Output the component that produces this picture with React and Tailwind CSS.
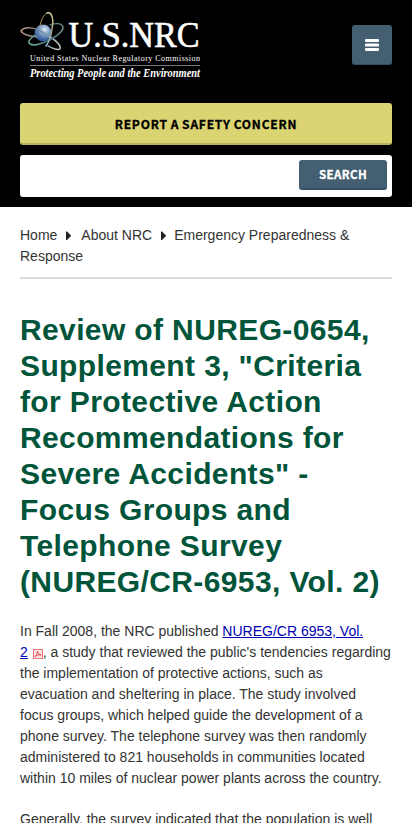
function Logo() {
  return (
    <svg width="190" height="76" viewBox="15 8 190 76" className="-ml-[5px] block overflow-visible" role="img" aria-label="U.S. NRC">
      <defs>
        <radialGradient id="globe" cx="0.6" cy="0.3" r="0.75">
          <stop offset="0" stopColor="#dce8f2" />
          <stop offset="0.4" stopColor="#7f9fc6" />
          <stop offset="1" stopColor="#1c4488" />
        </radialGradient>
        <linearGradient id="orbitA" x1="0" x2="1">
          <stop offset="0" stopColor="#c99a86" />
          <stop offset="0.5" stopColor="#6d8298" />
          <stop offset="1" stopColor="#c5d0d4" />
        </linearGradient>
        <linearGradient id="orbitB" x1="0" x2="1">
          <stop offset="0" stopColor="#6fae9a" />
          <stop offset="0.6" stopColor="#3c6878" />
          <stop offset="1" stopColor="#6f8a88" />
        </linearGradient>
        <linearGradient id="orbitC" x1="0" x2="0" y1="0" y2="1">
          <stop offset="0" stopColor="#ddd3a0" />
          <stop offset="0.5" stopColor="#a8a578" />
          <stop offset="1" stopColor="#93b8d8" />
        </linearGradient>
      </defs>
      <circle cx="43" cy="33" r="8.500" fill="url(#globe)" />
      <g fill="none" strokeWidth="1.5" strokeLinecap="round">
        <path d="M37 37C28 36 22 34 21 31C24 26 35 27 44 33C53 38 62 45 60 49C57 51 52 48 48 46" stroke="url(#orbitA)" />
        <path d="M50 25C58 22 63 24 63 28C62 33 54 38 45 42C38 45 31 46 29 43C28 41 31 38 35 35" stroke="url(#orbitB)" />
        <path d="M47 13C52 11 54 20 52 29C51 37 49 42 46 46" stroke="url(#orbitC)" />
        <path d="M47 13C43 15 41 21 40 26" stroke="#b5a05c" strokeWidth="1" />
      </g>
      <g fill="#fff">
        <text x="68.500" y="47" textLength="131" lengthAdjust="spacingAndGlyphs" className="font-['Liberation_Serif',serif] text-[36px] leading-none" stroke="#fff" strokeWidth=".6">U.S.NRC</text>
        <text x="30" y="61" textLength="170" lengthAdjust="spacing" className="font-['Liberation_Serif',serif] text-[8px] leading-none">United States Nuclear Regulatory Commission</text>
        <rect x="30" y="65" width="170" height="1" fill="#777" />
        <text x="30" y="77" textLength="170" lengthAdjust="spacingAndGlyphs" className="font-['Liberation_Serif',serif] text-[11.5px] leading-none font-bold italic">Protecting People and the Environment</text>
      </g>
    </svg>
  );
}

function MenuIcon() {
  return (
    <svg width="14" height="12" viewBox="0 0 14 12" className="mt-px" fill="#fff" aria-hidden="true">
      <rect width="14" height="3" rx="1" />
      <rect y="4.500" width="14" height="3" rx="1" />
      <rect y="9" width="14" height="3" rx="1" />
    </svg>
  );
}

function Arrow({ className }) {
  return (
    <svg width="5" height="10" viewBox="0 0 5 10" className={className} aria-hidden="true">
      <path d="M0 .5H1L5 4.500V5L1 9H0Z" fill="#222" />
    </svg>
  );
}

function PdfIcon() {
  return (
    <svg width="10" height="10" viewBox="0 0 11 11" className="ml-px inline-block align-[-2px]" aria-hidden="true">
      <rect x=".5" y=".5" width="10" height="10" fill="#fde5e7" stroke="#ef6b73" />
      <path d="M2 8.5C4 7 5 4.500 5 2.500C5.500 5 7 6.500 9 6.500C6 6 4 7 2 8.500" fill="none" stroke="#e5303b" strokeWidth=".9" />
    </svg>
  );
}

export default function App() {
  return (
    <div className="h-[823px] w-full overflow-hidden bg-white font-['Liberation_Sans',Arial,sans-serif] text-sm leading-[21px] text-[#333]">
      <header className="h-[207px] bg-black px-5 pt-2">
        <div className="flex h-[95px] items-start justify-between">
          <Logo />
          <button aria-label="Menu" className="mt-[17px] flex h-10 w-10 items-center justify-center rounded-[3px] border-b border-[#364f60] bg-[#445f71]">
            <MenuIcon />
          </button>
        </div>
        <button className="flex h-[42px] w-full items-center justify-center rounded-[3px] border-b-2 border-[#b9b462] bg-[#dbd472] font-['Noto_Sans_CJK_SC',sans-serif] text-[12px] font-bold tracking-[0.8px] [word-spacing:-0.6px] text-black [-webkit-text-stroke:0.3px_black]">
          REPORT A SAFETY CONCERN
        </button>
        <div className="mt-[10px] flex h-[42px] items-start justify-end rounded-[3px] bg-white pt-[5px] pr-[5px]">
          <button className="flex h-[30px] w-[88px] items-center justify-center rounded-[3px] border-b-2 border-[#364f60] bg-[#445f71] font-['Noto_Sans_CJK_SC',sans-serif] text-[11.5px] font-bold tracking-[0.4px] text-white [-webkit-text-stroke:0.3px_white]">
            SEARCH
          </button>
        </div>
      </header>
      <main className="px-5 pt-[18px]">
        <nav className="border-b-2 border-[#ddd] pb-[10px]">
          <div className="flex items-center whitespace-nowrap">
            <span>Home</span>
            <Arrow className="mr-[10px] ml-[9px]" />
            <span>About NRC</span>
            <Arrow className="mr-[8px] ml-[9px]" />
            <span>Emergency Preparedness &amp;</span>
          </div>
          <div>Response</div>
        </nav>
        <h1 className="mt-[33px] text-[30px] leading-9 font-bold tracking-[0.375px] whitespace-nowrap text-[#00543a]">
          Review of NUREG-0654,<br />
          Supplement 3, "Criteria<br />
          for Protective Action<br />
          Recommendations for<br />
          Severe Accidents" -<br />
          Focus Groups and<br />
          Telephone Survey<br />
          (NUREG/CR-6953, Vol. 2)
        </h1>
        <p className="mt-[21px] whitespace-nowrap">
          In Fall 2008, the NRC published <a className="text-[#0000b4] underline">NUREG/CR 6953, Vol.<br />2</a> <PdfIcon />, a study that reviewed the public's tendencies regarding<br />
          the implementation of protective actions, such as<br />
          evacuation and sheltering in place. The study involved<br />
          focus groups, which helped guide the development of a<br />
          phone survey. The telephone survey was then randomly<br />
          administered to 821 households in communities located<br />
          within 10 miles of nuclear power plants across the country.
        </p>
        <p className="mt-5 whitespace-nowrap">Generally, the survey indicated that the population is well</p>
      </main>
    </div>
  );
}
